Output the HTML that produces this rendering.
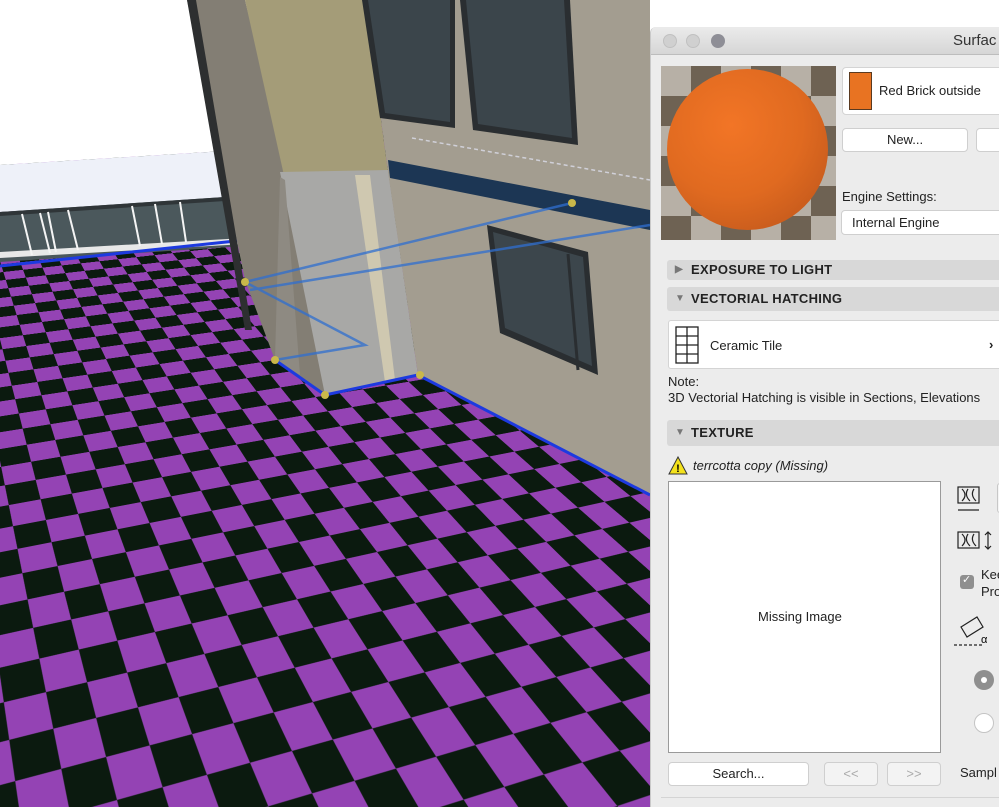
<!DOCTYPE html>
<html><head><meta charset="utf-8"><style>
*{margin:0;padding:0;box-sizing:border-box}
html,body{width:999px;height:807px;overflow:hidden}
body{position:relative;background:#fff;font-family:"Liberation Sans",Arial,sans-serif}
#floor{position:absolute;left:0;top:0;width:999px;height:807px;perspective:820px;perspective-origin:150px 300px;overflow:hidden}
#plane{position:absolute;left:-3000px;width:7000px;top:-3193px;height:4300px;transform-origin:3150px 4000px;transform:rotateX(64deg) rotateZ(-16deg);background:conic-gradient(#9443b4 25%,#0b1a0f 0 50%,#9443b4 0 75%,#0b1a0f 0) 0 0/96px 96px}
svg.scene{position:absolute;left:0;top:0}
#panel{position:absolute;left:650px;top:27px;width:360px;height:780px;background:#ececec;border-left:1px solid #c9c9c9;border-top-left-radius:6px;overflow:hidden}
.t{position:absolute;white-space:nowrap;color:#222;font-size:13px}
.btn{position:absolute;background:#fff;border:1px solid #cfcfcf;border-radius:4px;font-size:13px;text-align:center;color:#222}
.hdr{position:absolute;left:16px;width:340px;background:#d8d8d8;border-radius:3px;font-weight:bold;font-size:13px;color:#222;letter-spacing:.3px}
.hdr span{position:absolute;left:8px;color:#777;font-size:10px}
</style></head><body>
<div id="floor"><div id="plane"></div></div>
<svg class="scene" width="999" height="807" viewBox="0 0 999 807">
<polygon points="0,0 240,0 240,150 0,165" fill="#ffffff"/>
<polygon points="0,165 240,150 240,198 0,212" fill="#eef1f9"/>
<polygon points="0,212 240,196 245,246 0,262" fill="#4b585c"/>
<polygon points="0,212 240,196 240,200 0,216" fill="#2f3538"/>
<polygon points="0,252 245,238 245,244 0,258" fill="#e8e8e8"/>
<g stroke="#f4f4f4" stroke-width="2">
<line x1="22" y1="214" x2="32" y2="255"/><line x1="40" y1="213" x2="50" y2="253"/><line x1="48" y1="212" x2="56" y2="252"/>
<line x1="68" y1="210" x2="78" y2="250"/><line x1="132" y1="206" x2="140" y2="246"/><line x1="155" y1="204" x2="162" y2="244"/><line x1="180" y1="202" x2="186" y2="242"/>
</g>
<line x1="0" y1="266" x2="245" y2="240" stroke="#1d3ae0" stroke-width="3"/>
<polygon points="187,0 245,0 300,225 325,395 275,360 245,280" fill="#837e74"/>
<polygon points="187,0 196,0 252,330 245,330" fill="#2d2f30"/>
<polygon points="245,0 365,0 388,172 285,180" fill="#a49c78"/>
<polygon points="280,172 388,170 418,375 325,395" fill="#a8a8a6"/>
<polygon points="355,175 370,175 395,380 385,382" fill="#cfc8b0"/>
<polygon points="280,177 285,180 300,375 275,360" fill="#8e8a82"/>
<polygon points="365,0 650,0 650,495 418,375 388,172" fill="#a39d90"/>
<polygon points="362,0 455,0 455,128 380,118" fill="#2a2e31"/><polygon points="368,0 450,0 450,122 385,113" fill="#3b454b"/>
<polygon points="460,0 570,0 578,145 473,130" fill="#2a2e31"/><polygon points="466,0 564,0 572,138 478,124" fill="#3b454b"/>
<polygon points="388,160 650,210 650,230 390,178" fill="#1c3654"/>
<polygon points="487,225 588,252 598,375 500,333" fill="#2a2e31"/><polygon points="493,232 583,257 592,366 505,328" fill="#3c464c"/>
<line x1="568" y1="254" x2="578" y2="370" stroke="#2a2e31" stroke-width="3"/>
<line x1="412" y1="138" x2="650" y2="180" stroke="#d0d0d8" stroke-width="1.5" stroke-dasharray="4,3"/>
<polyline points="275,360 325,395 418,375 650,495" fill="none" stroke="#1d3ae0" stroke-width="3"/>
<g stroke="#2f6fd0" stroke-width="2.5" opacity=".75" fill="none">
<polyline points="245,282 572,203"/><polyline points="250,290 650,225"/><polyline points="245,282 365,345 275,360"/>
</g>
<g fill="#c9b84a"><circle cx="245" cy="282" r="4"/><circle cx="275" cy="360" r="4"/><circle cx="325" cy="395" r="4"/><circle cx="420" cy="375" r="4"/><circle cx="572" cy="203" r="4"/></g>
</svg>
<div id="panel">
<div style="position:absolute;left:0;top:0;width:360px;height:28px;background:linear-gradient(#ebebeb,#d6d6d6);border-bottom:1px solid #bdbdbd"></div>
<div style="position:absolute;left:12px;top:7px;width:14px;height:14px;border-radius:50%;background:#d0d0d0;border:1px solid #c0c0c0"></div>
<div style="position:absolute;left:35px;top:7px;width:14px;height:14px;border-radius:50%;background:#d0d0d0;border:1px solid #c0c0c0"></div>
<div style="position:absolute;left:60px;top:7px;width:14px;height:14px;border-radius:50%;background:#8e8e96"></div>
<div class="t" style="left:302px;top:5px;font-size:15px;color:#333">Surfac</div>
<div style="position:absolute;left:10px;top:39px;width:175px;height:174px;background:conic-gradient(#6e6253 25%,#b7b0a6 0 50%,#6e6253 0 75%,#b7b0a6 0) 0 0/60px 60px;overflow:hidden">
<div style="position:absolute;left:6px;top:3px;width:161px;height:161px;border-radius:50%;background:radial-gradient(circle at 40% 35%,#f27526,#e06a20 50%,#b8521a 100%)"></div></div>
<div style="position:absolute;left:191px;top:40px;width:170px;height:48px;background:#fff;border:1px solid #d4d4d4;border-radius:4px"></div>
<div style="position:absolute;left:198px;top:45px;width:23px;height:38px;background:#e87322;border:1px solid #5a3a20"></div>
<div class="t" style="left:228px;top:56px">Red Brick outside</div>
<div class="btn" style="left:191px;top:101px;width:126px;height:24px;line-height:22px">New...</div>
<div class="btn" style="left:325px;top:101px;width:40px;height:24px"></div>
<div class="t" style="left:191px;top:162px">Engine Settings:</div>
<div class="btn" style="left:190px;top:183px;width:175px;height:25px;text-align:left;padding-left:10px;line-height:23px">Internal Engine</div>
<div class="hdr" style="top:233px;height:20px;line-height:20px"><span>▶</span><b style="position:absolute;left:24px">EXPOSURE TO LIGHT</b></div>
<div class="hdr" style="top:260px;height:24px;line-height:24px"><span>▼</span><b style="position:absolute;left:24px">VECTORIAL HATCHING</b></div>
<div style="position:absolute;left:17px;top:293px;width:345px;height:49px;background:#fff;border:1px solid #d4d4d4;border-radius:3px"></div>
<svg style="position:absolute;left:24px;top:299px" width="24" height="38"><g stroke="#222" stroke-width="1.3" fill="none"><rect x="1" y="1" width="22" height="36"/><line x1="1" y1="10" x2="23" y2="10"/><line x1="1" y1="19" x2="23" y2="19"/><line x1="1" y1="28" x2="23" y2="28"/><line x1="12" y1="1" x2="12" y2="37"/></g></svg>
<div class="t" style="left:59px;top:311px">Ceramic Tile</div>
<div class="t" style="left:338px;top:310px;font-weight:bold">›</div>
<div class="t" style="left:17px;top:347px">Note:</div>
<div class="t" style="left:17px;top:363px">3D Vectorial Hatching is visible in Sections, Elevations</div>
<div class="hdr" style="top:393px;height:26px;line-height:26px"><span>▼</span><b style="position:absolute;left:24px">TEXTURE</b></div>
<svg style="position:absolute;left:17px;top:429px" width="20" height="20"><polygon points="10,1 19,18 1,18" fill="#f4e21c" stroke="#333"/><text x="10" y="16" font-size="11" text-anchor="middle" font-weight="bold" font-family="Liberation Sans">!</text></svg>
<div class="t" style="left:42px;top:431px;font-style:italic">terrcotta copy (Missing)</div>
<div style="position:absolute;left:17px;top:454px;width:273px;height:272px;background:#fff;border:1px solid #9a9a9a"></div>
<div class="t" style="left:107px;top:582px">Missing Image</div>
<div class="btn" style="left:17px;top:735px;width:141px;height:24px;line-height:22px">Search...</div>
<div class="btn" style="left:173px;top:735px;width:54px;height:24px;line-height:22px;color:#aaa;background:#f3f3f3">&lt;&lt;</div>
<div class="btn" style="left:236px;top:735px;width:54px;height:24px;line-height:22px;color:#aaa;background:#f3f3f3">&gt;&gt;</div>
<svg style="position:absolute;left:305px;top:458px" width="30" height="32"><g stroke="#222" fill="none" stroke-width="1.2"><rect x="2" y="2" width="21" height="16"/><path d="M6 4 Q12 10 6 16 M12 4 Q8 10 14 16 M18 4 Q14 10 20 16"/><line x1="2" y1="25" x2="23" y2="25"/></g></svg>
<div style="position:absolute;left:346px;top:456px;width:10px;height:30px;border:1px solid #c8c8c8;border-radius:3px;background:#f5f5f5"></div>
<svg style="position:absolute;left:305px;top:503px" width="40" height="22"><g stroke="#222" fill="none" stroke-width="1.2"><rect x="2" y="2" width="21" height="16"/><path d="M6 4 Q12 10 6 16 M12 4 Q8 10 14 16 M18 4 Q14 10 20 16 M32 2 V19 M29 5 L32 2 35 5 M29 16 L32 19 35 16"/></g></svg>
<div style="position:absolute;left:309px;top:548px;width:14px;height:14px;border-radius:3px;background:#8f8f8f"></div>
<div class="t" style="left:311px;top:546px;color:#fff;font-size:11px">✓</div>
<div class="t" style="left:330px;top:540px">Kee</div>
<div class="t" style="left:330px;top:557px">Pro</div>
<svg style="position:absolute;left:302px;top:586px" width="40" height="36"><g stroke="#222" fill="none" stroke-width="1.2"><polygon points="8,14 24,4 30,14 14,24"/><line x1="1" y1="32" x2="30" y2="32" stroke-dasharray="3,2"/></g><text x="28" y="30" font-size="11" font-family="Liberation Sans">α</text></svg>
<div style="position:absolute;left:323px;top:643px;width:20px;height:20px;border-radius:50%;background:#8f8f8f"></div>
<div style="position:absolute;left:330px;top:650px;width:6px;height:6px;border-radius:50%;background:#fff"></div>
<div style="position:absolute;left:323px;top:686px;width:20px;height:20px;border-radius:50%;background:#fff;border:1px solid #c4c4c4"></div>
<div class="t" style="left:309px;top:738px">Sampl</div>
<div style="position:absolute;left:10px;top:770px;width:350px;height:1px;background:#d4d4d4"></div>
</div>
</body></html>
